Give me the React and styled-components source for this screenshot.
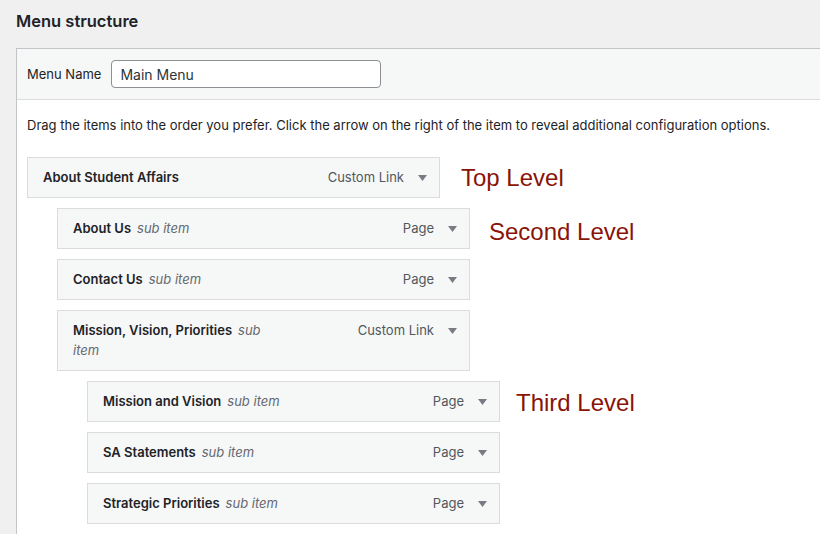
import React from 'react';
import styled, { createGlobalStyle } from 'styled-components';

const GlobalStyle = createGlobalStyle`
  html, body {
    margin: 0;
    padding: 0;
    background: #f0f0f1;
    overflow: hidden;
  }
  body {
    font-family: Inter, "Liberation Sans", Arial, sans-serif;
    color: #1d2327;
    font-size: 13px;
  }
`;

const Page = styled.div`
  padding: 12px 0 0 16px;
  width: 820px;
  box-sizing: border-box;
`;

const Heading = styled.h2`
  margin: 0 0 18px;
  font-size: 16.5px;
  font-weight: 600;
  line-height: 18px;
  color: #1d2327;
`;

const Panel = styled.div`
  margin-right: -30px;
  border: 1px solid #c3c4c7;
  background: #fff;
  min-height: 600px;
`;

const PanelHeader = styled.div`
  display: flex;
  align-items: center;
  gap: 10px;
  height: 50px;
  padding: 0 10px;
  background: #f6f7f7;
  border-bottom: 1px solid #dcdcde;
`;

const Label = styled.label`
  font-size: 13px;
  color: #1d2327;
`;

const NameInput = styled.input`
  box-sizing: border-box;
  width: 270px;
  height: 28px;
  padding: 0 8px;
  border: 1px solid #8c8f94;
  border-radius: 4px;
  font-family: Inter, "Liberation Sans", Arial, sans-serif;
  font-size: 14px;
  color: #2c3338;
  background: #fff;
  outline: none;
`;

const PanelBody = styled.div`
  padding: 0 10px;
`;

const Instructions = styled.p`
  margin: 15px 0 22px;
  line-height: 20px;
  font-size: 13px;
  color: #1d2327;
`;

const Row = styled.div`
  display: flex;
  align-items: center;
  gap: ${p => p.$gap}px;
  margin-bottom: 10px;
  padding-left: ${p => p.$depth * 30}px;
`;

const Item = styled.div`
  box-sizing: border-box;
  width: 413px;
  display: flex;
  align-items: flex-start;
  padding: 10px 12px 10px 15px;
  background: #f6f7f7;
  border: 1px solid #dcdcde;
  line-height: 19px;
`;

const Title = styled.div`
  flex: 1;
  max-width: 212px;
  font-size: 13px;
  font-weight: 600;
  color: #1d2327;
  line-height: ${p => (p.$wrap ? '19.5px' : '19px')};
`;

const SubItem = styled.span`
  margin-left: 6px;
  font-weight: 400;
  font-style: italic;
  color: #646970;
`;

const Controls = styled.div`
  margin-left: auto;
  display: flex;
  align-items: center;
  gap: 14px;
  height: 19px;
  color: #50575e;
  font-size: 13px;
`;

const Arrow = styled.svg`
  width: 9px;
  height: 6px;
  fill: #787c82;
`;

const LevelNote = styled.span`
  font-family: "Liberation Sans", Arial, sans-serif;
  font-size: 24px;
  color: #8a1308;
  margin-top: ${p => p.$shift}px;
  white-space: nowrap;
`;

const items = [
  { title: 'About Student Affairs', type: 'Custom Link', depth: 0, note: 'Top Level', gap: 21, shift: 1 },
  { title: 'About Us', type: 'Page', depth: 1, note: 'Second Level', gap: 19, shift: 6 },
  { title: 'Contact Us', type: 'Page', depth: 1 },
  { title: 'Mission, Vision, Priorities', type: 'Custom Link', depth: 1, wrap: true },
  { title: 'Mission and Vision', type: 'Page', depth: 2, note: 'Third Level', gap: 16, shift: 3 },
  { title: 'SA Statements', type: 'Page', depth: 2 },
  { title: 'Strategic Priorities', type: 'Page', depth: 2 },
];

const App = () => (
  <>
    <GlobalStyle />
    <Page>
      <Heading>Menu structure</Heading>
      <Panel>
        <PanelHeader>
          <Label htmlFor="menu-name">Menu Name</Label>
          <NameInput id="menu-name" defaultValue="Main Menu" />
        </PanelHeader>
        <PanelBody>
          <Instructions>
            Drag the items into the order you prefer. Click the arrow on the right of the item to reveal additional configuration options.
          </Instructions>
          {items.map(({ title, type, depth, note, gap, shift, wrap }) => (
            <Row key={title} $depth={depth} $gap={gap || 0}>
              <Item>
                <Title $wrap={wrap}>
                  {title}
                  {depth > 0 && <SubItem>sub item</SubItem>}
                </Title>
                <Controls>
                  <span>{type}</span>
                  <Arrow viewBox="0 0 9 6">
                    <polygon points="0,0 9,0 4.5,6" />
                  </Arrow>
                </Controls>
              </Item>
              {note && <LevelNote $shift={shift}>{note}</LevelNote>}
            </Row>
          ))}
        </PanelBody>
      </Panel>
    </Page>
  </>
);

export default App;
